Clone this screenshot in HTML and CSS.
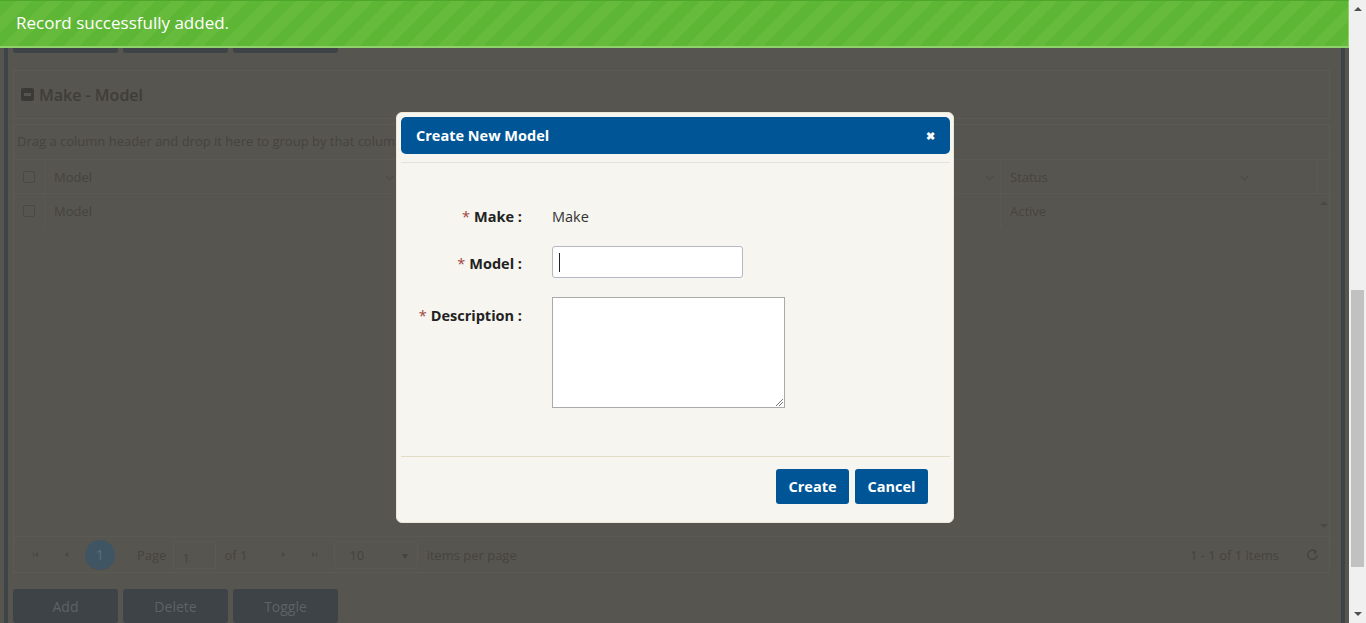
FILE: index.html
```html
<!DOCTYPE html>
<html lang="en">
<head>
<meta charset="utf-8">
<title>Make - Model</title>
<link rel="stylesheet" href="styles.css">
</head>
<body>
<div class="app">
  <div class="main">
    <div class="frame">
      <div class="btn-row top-row">
        <button class="dim-btn" aria-label="Add"></button>
        <button class="dim-btn" aria-label="Delete"></button>
        <button class="dim-btn" aria-label="Toggle"></button>
      </div>
      <div class="panel">
        <span class="minus-icon"></span>
        <span class="panel-title">Make - Model</span>
      </div>
      <div class="grid">
        <div class="group-area">Drag a column header and drop it here to group by that column</div>
        <div class="grid-row grid-head">
          <div class="cell c-check"><span class="chk"></span></div>
          <div class="cell c-model">Model<svg class="chev" viewBox="0 0 10 6"><polyline points="1,1 5,5 9,1"/></svg></div>
          <div class="cell c-desc"><svg class="chev" viewBox="0 0 10 6"><polyline points="1,1 5,5 9,1"/></svg></div>
          <div class="cell c-status">Status<svg class="chev" viewBox="0 0 10 6"><polyline points="1,1 5,5 9,1"/></svg></div>
          <div class="cell c-fill"></div>
          <div class="cell c-sb"></div>
        </div>
        <div class="grid-body">
          <div class="rows">
            <div class="grid-row">
              <div class="cell c-check"><span class="chk"></span></div>
              <div class="cell c-model">Model</div>
              <div class="cell c-desc"></div>
              <div class="cell c-status">Active</div>
            </div>
          </div>
          <div class="vscroll">
            <span class="tri up"></span>
            <span class="tri down"></span>
          </div>
        </div>
        <div class="pager">
          <span class="pg-btn"><svg viewBox="0 0 8 8"><rect x="1" y="1" width="1.2" height="6"/><polygon points="7,1 7,7 3,4"/></svg></span>
          <span class="pg-btn"><svg viewBox="0 0 8 8"><polygon points="6,1 6,7 2,4"/></svg></span>
          <span class="pg-cur">1</span>
          <span class="pg-text pg-label">Page</span>
          <span class="pg-input">1</span>
          <span class="pg-text">of 1</span>
          <span class="pg-btn nx"><svg viewBox="0 0 8 8"><polygon points="2,1 2,7 6,4"/></svg></span>
          <span class="pg-btn"><svg viewBox="0 0 8 8"><polygon points="1,1 1,7 5,4"/><rect x="5.8" y="1" width="1.2" height="6"/></svg></span>
          <span class="pg-select">10<span class="caret"></span></span>
          <span class="pg-text">items per page</span>
          <span class="pg-info">1 - 1 of 1 items</span>
          <svg class="refresh" viewBox="0 0 14 14"><path d="M10.5 3.8A5 5 0 1 0 12 7.5"/><polyline points="7.5,1.5 10.8,3.8 8.6,6.4"/></svg>
        </div>
      </div>
      <div class="btn-row bottom-row">
        <button class="dim-btn">Add</button>
        <button class="dim-btn">Delete</button>
        <button class="dim-btn">Toggle</button>
      </div>
    </div>
  </div>
  <div class="scrollbar">
    <span class="sb-arrow sb-up"></span>
    <div class="sb-track"><div class="sb-thumb"></div></div>
    <span class="sb-arrow sb-down"></span>
  </div>
</div>

<div class="toast">Record successfully added.</div>

<div class="modal-layer">
  <div class="modal">
    <div class="modal-title">
      <span>Create New Model</span>
      <span class="close">&#10006;</span>
    </div>
    <div class="modal-body">
      <div class="form-row r-make">
        <label class="lbl"><span class="req">*</span><span class="lbl-text">Make :</span></label>
        <span class="value">Make</span>
      </div>
      <div class="form-row r-model">
        <label class="lbl"><span class="req">*</span><span class="lbl-text">Model :</span></label>
        <div class="text-input"><span class="cursor"></span></div>
      </div>
      <div class="form-row top">
        <label class="lbl"><span class="req">*</span><span class="lbl-text">Description :</span></label>
        <div class="textarea"><svg class="grip" viewBox="0 0 8 8"><line x1="1" y1="8" x2="8" y2="1"/><line x1="4" y1="8" x2="8" y2="4"/></svg></div>
      </div>
    </div>
    <div class="modal-footer">
      <button class="blue-btn">Create</button>
      <button class="blue-btn">Cancel</button>
    </div>
  </div>
</div>
</body>
</html>
```

FILE: styles.css
```css
* { box-sizing: border-box; }
html, body { margin: 0; height: 623px; overflow: hidden; }
body {
  background: #57554f;
  font-family: "Open Sans", "Noto Sans", sans-serif;
  color: #45443f;
}
.app { display: flex; height: 623px; }
.main { flex: 1; padding: 0 4px; }
.frame {
  height: 623px;
  border-left: 4px solid #3d4347;
  border-right: 4px solid #3d4347;
  padding: 19px 11px 0 5px;
  display: flex;
  flex-direction: column;
}
.btn-row { display: flex; gap: 5px; }
.dim-btn {
  width: 105px; height: 34px;
  border: 0; border-radius: 3px;
  background: #3d4347;
  color: #5d6266;
  font-family: inherit; font-size: 14px;
}
.top-row { margin-bottom: 17px; }
.bottom-row { margin-top: 16px; }
.panel {
  height: 49px;
  border: 1px solid #5c5a54;
  display: flex; align-items: center;
  padding-left: 7px;
  gap: 5px;
}
.minus-icon {
  width: 13px; height: 13px; border-radius: 2px;
  background: #3b3a36; position: relative;
}
.minus-icon::after {
  content: ""; position: absolute; left: 3px; right: 3px; top: 5px; height: 3px; background: #57554f;
}
.panel-title { font-size: 16px; font-weight: 600; color: #3e3d39; }
.grid {
  margin-top: 5px;
  height: 449px;
  border: 1px solid #5c5a54;
  display: flex; flex-direction: column;
  font-size: 13px;
}
.group-area {
  height: 35px; line-height: 33px; padding-left: 3px; color: #45443f;
  border-bottom: 1px solid #5b5953;
}
.grid-row { display: flex; height: 34px; border-bottom: 1px solid #5b5953; }
.cell { display: flex; align-items: center; padding-left: 9px; position: relative; border-left: 1px solid #5b5953; }
.cell:first-child { border-left: 0; }
.c-check { width: 30px; justify-content: center; padding-left: 0; }
.chk { width: 12px; height: 12px; border: 1px solid #4a4944; border-radius: 2px; }
.c-model { width: 356px; }
.c-desc { width: 600px; }
.c-status { width: 255px; }
.c-fill { width: 62px; border-left: 0; }
.c-sb { flex: 1; }
.chev { position: absolute; right: 6px; top: 15px; width: 9px; height: 6px; fill: none; stroke: #4a4944; stroke-width: 1.2; }
.grid-body { flex: 1; display: flex; }
.rows { flex: 1; }
.rows .grid-row { border-bottom: 0; }
.vscroll { width: 13px; position: relative; }
.tri { position: absolute; left: 4px; width: 0; height: 0; border-left: 4px solid transparent; border-right: 4px solid transparent; }
.tri.up { top: 7px; border-bottom: 4px solid #4a4944; }
.tri.down { bottom: 8px; border-top: 4px solid #4a4944; }
.pager {
  height: 36px; border-top: 1px solid #5b5953;
  display: flex; align-items: center; padding-left: 6px;
}
.pg-btn { width: 31px; height: 28px; display: flex; align-items: center; justify-content: center; }
.pg-btn svg { width: 7px; height: 7px; fill: #4a4944; }
.pg-btn.nx { margin-left: 21px; }
.pg-cur {
  width: 30px; height: 30px; border-radius: 50%; background: #3f5563; color: #5a6e7b;
  display: flex; align-items: center; justify-content: center; font-size: 14px; margin: 0 22px 0 3px;
}
.pg-text { color: #45443f; font-size: 13px; }
.pg-label { margin-right: 7px; }
.pg-input { width: 43px; height: 28px; border: 1px solid #5c5a54; border-radius: 3px; padding: 7px 0 0 8px; margin-right: 8px; font-size: 13px; }
.pg-select { width: 84px; height: 28px; border: 1px solid #5c5a54; border-radius: 3px; margin: 0 8px 0 4px; display: flex; align-items: center; padding-left: 14px; position: relative; font-size: 13px; }
.caret { position: absolute; right: 9px; top: 12px; width: 0; height: 0; border-left: 3.5px solid transparent; border-right: 3.5px solid transparent; border-top: 5px solid #45443f; }
.pg-info { margin-left: auto; margin-right: 27px; font-size: 13px; }
.refresh { width: 13px; height: 13px; margin-right: 10px; fill: none; stroke: #45443f; stroke-width: 1.5; }
.scrollbar { width: 17px; background: #f0f0f0; display: flex; flex-direction: column; align-items: center; }
.sb-arrow { width: 0; height: 0; border-left: 4px solid transparent; border-right: 4px solid transparent; }
.sb-up { border-bottom: 4px solid #505050; margin: 7px 0 6px; }
.sb-down { border-top: 4px solid #505050; margin: 6px 0 7px; }
.sb-track { flex: 1; width: 100%; display: flex; flex-direction: column; justify-content: flex-end; padding: 0 2px 39px; }
.sb-thumb { height: 277px; background: #c1c1c1; }

.toast {
  position: fixed; left: 0; top: 0; width: 1349px; height: 48px;
  background-color: #5db634;
  background-image: repeating-linear-gradient(135deg, #5db634 0 11px, #66bb3d 11px 22px);
  border-top: 1px solid #4ea62a;
  border-bottom: 2px solid #8fd16b;
  border-right: 1px solid #8fd16b;
  color: #fff; font-size: 17px;
  padding-left: 16px; line-height: 44px;
}
.modal-layer { position: fixed; left: 396px; top: 112px; }
.modal {
  width: 558px; height: 411px;
  background: #f6f5f0; border: 1px solid #ece8d8;
  border-radius: 6px; padding: 4px 3px 0 4px;
  display: flex; flex-direction: column;
  color: #222;
}
.modal-title {
  height: 37px; background: #005596; border-radius: 5px;
  display: flex; align-items: center; justify-content: space-between;
  padding: 0 15px 0 15px; color: #fff; font-weight: 700; font-size: 14.5px;
}
.close { font-size: 11px; }
.modal-body {
  border-top: 1px solid #e3e2de; margin-top: 8px;
  height: 294px; padding-top: 42px;
}
.form-row { display: flex; align-items: center; }
.r-make { margin-bottom: 18px; }
.r-model { margin-bottom: 19px; }
.r-model .lbl { padding-top: 3px; }
.form-row.top { align-items: flex-start; }
.form-row.top .lbl { padding-top: 9px; }
.lbl {
  width: 121px; margin-right: 30px;
  display: flex; justify-content: flex-end; align-items: baseline; gap: 4px;
  font-weight: 700; font-size: 14.5px; color: #222;
}
.req { color: #a0443f; font-weight: 400; }
.value { font-size: 14.5px; color: #333; height: 23px; line-height: 23px; }
.text-input { width: 191px; height: 32px; background: #fff; border: 1px solid #b4b8c2; border-radius: 3px; padding: 6px 0 0 6px; }
.cursor { display: block; width: 1px; height: 19px; background: #222; }
.textarea { width: 233px; height: 111px; background: #fff; border: 1px solid #aaa; position: relative; }
.grip { position: absolute; right: 1px; bottom: 1px; width: 8px; height: 8px; stroke: #777; stroke-width: 1; }
.modal-footer {
  border-top: 1px solid #e2ddc6; height: 66px;
  display: flex; justify-content: flex-end; align-items: flex-start; gap: 6px;
  padding: 12px 22px 0 0;
}
.blue-btn {
  width: 73px; height: 35px; border: 0; border-radius: 3px;
  background: #005596; color: #fff; font-family: inherit; font-weight: 700; font-size: 14.5px;
}
```
